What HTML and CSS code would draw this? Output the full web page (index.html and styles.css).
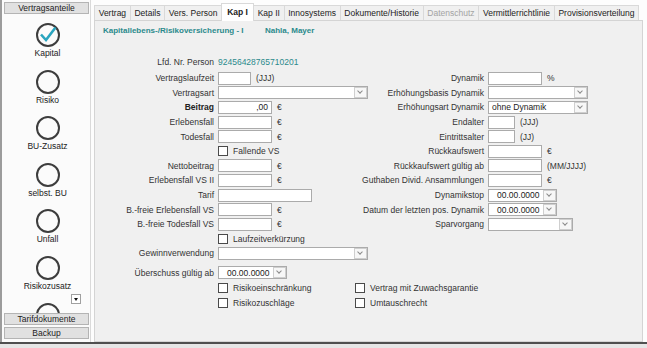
FILE: index.html
```html
<!DOCTYPE html>
<html lang="de">
<head>
  <meta charset="UTF-8">
  <title>Vertrag - Kap I</title>
  <link rel="stylesheet" href="styles.css">
</head>
<body>
  <div class="app">
    <!-- Vertragsanteile -->
    <aside class="sidebar">
      <button class="side-btn first">Vertragsanteile</button>
      <div class="parts">
        <div class="part">
          <span class="ring">
            <svg width="24" height="24" viewBox="0 0 24 24"><polyline points="5,11.5 10,17 19.5,4.5" fill="none" stroke="#2aa5bf" stroke-width="2.6"/></svg>
          </span>
          <span class="part-name">Kapital</span>
        </div>
        <div class="part"><span class="ring"></span><span class="part-name">Risiko</span></div>
        <div class="part"><span class="ring"></span><span class="part-name">BU-Zusatz</span></div>
        <div class="part"><span class="ring"></span><span class="part-name">selbst. BU</span></div>
        <div class="part"><span class="ring"></span><span class="part-name">Unfall</span></div>
        <div class="part"><span class="ring"></span><span class="part-name">Risikozusatz</span></div>
        <div class="part"><span class="ring"></span></div>
      </div>
      <span class="more"></span>
      <button class="side-btn">Tarifdokumente</button>
      <button class="side-btn gap">Backup</button>
    </aside>

    <main class="main">
      <!-- Reiter -->
      <nav class="tabs">
        <span class="tab">Vertrag</span>
        <span class="tab">Details</span>
        <span class="tab">Vers. Person</span>
        <span class="tab active">Kap I</span>
        <span class="tab">Kap II</span>
        <span class="tab">Innosystems</span>
        <span class="tab">Dokumente/Historie</span>
        <span class="tab off">Datenschutz</span>
        <span class="tab">Vermittlerrichtlinie</span>
        <span class="tab">Provisionsverteilung</span>
      </nav>

      <section class="panel">
        <div class="panel-head">
          <span class="head-title">Kapitallebens-/Risikoversicherung - I</span>
          <span>Nahla, Mayer</span>
        </div>

        <div class="form">
          <span class="l1">Lfd. Nr. Person</span>
          <span class="f1 num">92456428765710201</span>

          <span class="l1">Vertragslaufzeit</span>
          <span class="f1"><span class="box w33"></span><span class="unit">(JJJ)</span></span>
          <span class="l2">Dynamik</span>
          <span class="f2"><span class="box w54"></span><span class="unit">%</span></span>

          <span class="l1">Vertragsart</span>
          <span class="f1"><span class="box sel w150"><span></span><span class="drop"></span></span></span>
          <span class="l2">Erhöhungsbasis Dynamik</span>
          <span class="f2"><span class="box sel w100"><span></span><span class="drop"></span></span></span>

          <span class="l1 bold">Beitrag</span>
          <span class="f1"><span class="box w54 right">,00</span><span class="unit">€</span></span>
          <span class="l2">Erhöhungsart Dynamik</span>
          <span class="f2"><span class="box sel w100"><span>ohne Dynamik</span><span class="drop"></span></span></span>

          <span class="l1">Erlebensfall</span>
          <span class="f1"><span class="box w54"></span><span class="unit">€</span></span>
          <span class="l2">Endalter</span>
          <span class="f2"><span class="box w27"></span><span class="unit">(JJJ)</span></span>

          <span class="l1">Todesfall</span>
          <span class="f1"><span class="box w54"></span><span class="unit">€</span></span>
          <span class="l2">Eintrittsalter</span>
          <span class="f2"><span class="box w27"></span><span class="unit">(JJ)</span></span>

          <span class="f1"><span class="check"><span class="cb"></span>Fallende VS</span></span>
          <span class="l2">Rückkaufswert</span>
          <span class="f2"><span class="box w54"></span><span class="unit">€</span></span>

          <span class="l1">Nettobeitrag</span>
          <span class="f1"><span class="box w54"></span><span class="unit">€</span></span>
          <span class="l2">Rückkaufswert gültig ab</span>
          <span class="f2"><span class="box w54"></span><span class="unit">(MM/JJJJ)</span></span>

          <span class="l1">Erlebensfall VS II</span>
          <span class="f1"><span class="box w54"></span><span class="unit">€</span></span>
          <span class="l2">Guthaben Divid. Ansammlungen</span>
          <span class="f2"><span class="box w54"></span><span class="unit">€</span></span>

          <span class="l1">Tarif</span>
          <span class="f1"><span class="box w94"></span></span>
          <span class="l2">Dynamikstop</span>
          <span class="f2"><span class="box date"><span>00.00.0000</span><span class="drop"></span></span></span>

          <span class="l1">B.-freie Erlebensfall VS</span>
          <span class="f1"><span class="box w54"></span><span class="unit">€</span></span>
          <span class="l2">Datum der letzten pos. Dynamik</span>
          <span class="f2"><span class="box date"><span>00.00.0000</span><span class="drop"></span></span></span>

          <span class="l1">B.-freie Todesfall VS</span>
          <span class="f1"><span class="box w54"></span><span class="unit">€</span></span>
          <span class="l2">Sparvorgang</span>
          <span class="f2"><span class="box sel w85"><span></span><span class="drop"></span></span></span>

          <span class="f1"><span class="check"><span class="cb"></span>Laufzeitverkürzung</span></span>

          <span class="l1">Gewinnverwendung</span>
          <span class="f1"><span class="box sel w150"><span></span><span class="drop"></span></span></span>

          <span class="l1 late">Überschuss gültig ab</span>
          <span class="f1 late"><span class="box date"><span>00.00.0000</span><span class="drop"></span></span></span>

          <span class="f1 wide">
            <span class="check pair"><span class="cb"></span>Risikoeinschränkung</span>
            <span class="check"><span class="cb"></span>Vertrag mit Zuwachsgarantie</span>
          </span>

          <span class="f1 wide">
            <span class="check pair"><span class="cb"></span>Risikozuschläge</span>
            <span class="check"><span class="cb"></span>Umtauschrecht</span>
          </span>
        </div>
      </section>
    </main>
  </div>
</body>
</html>
```

FILE: styles.css
```css
/* Basis */
* {
  margin: 0;
  padding: 0;
  box-sizing: border-box;
}

body {
  width: 647px;
  height: 348px;
  overflow: hidden;
  background: #e6e6e6;
  font-family: "Liberation Sans", Arial, sans-serif;
  font-size: 8.5px;
  color: #333;
}

.app {
  display: flex;
  height: 344px;
  background: #fafafa;
  border-bottom: 2px solid #4f4f4f;
}

/* Seitenleiste */
.sidebar {
  position: relative;
  display: flex;
  flex-direction: column;
  width: 91px;
  background: #fbfbfb;
  border-left: 2px solid #9c9c9c;
  border-right: 1px solid #dadada;
}

.side-btn {
  width: 85px;
  height: 12px;
  margin-left: 2px;
  background: #e1e1e1;
  border: 1px solid #b4b4b4;
  font: inherit;
  font-size: 8.5px;
  line-height: 10px;
  color: #222;
}

.side-btn.first {
  margin-top: 2px;
}

.side-btn.gap {
  margin-top: 2px;
}

.parts {
  height: 299px;
  overflow: hidden;
  padding: 9px 0 0 3px;
}

.part {
  display: flex;
  flex-direction: column;
  align-items: center;
  height: 46.6px;
}

.ring {
  position: relative;
  width: 24px;
  height: 24px;
  border: 2px solid #3d3d3d;
  border-radius: 50%;
}

.ring svg {
  position: absolute;
  left: -2px;
  top: -2px;
}

.part-name {
  margin-top: 1px;
  line-height: 10px;
  color: #222;
}

.more {
  position: absolute;
  left: 69px;
  top: 294px;
  width: 10px;
  height: 10px;
  background: #fff;
  border: 1px solid #a0a0a0;
}

.more::after {
  content: "";
  position: absolute;
  left: 2px;
  top: 3px;
  border-left: 2px solid transparent;
  border-right: 2px solid transparent;
  border-top: 3px solid #111;
}

/* Hauptbereich */
.main {
  flex: 1;
  display: flex;
  flex-direction: column;
  padding: 3px 4px 0 3px;
  background: #fdfdfd;
}

.tabs {
  display: flex;
  align-items: flex-end;
  height: 17px;
}

.tab {
  height: 15px;
  padding: 0 3.7px;
  margin-right: -1px;
  background: #f0f0f0;
  border: 1px solid #d9d9d9;
  border-bottom: none;
  font-size: 8.5px;
  line-height: 14px;
  color: #222;
  white-space: nowrap;
}

.tab.active {
  position: relative;
  z-index: 1;
  height: 18px;
  margin-bottom: -1px;
  padding: 0 5px;
  background: #fff;
  font-weight: bold;
  line-height: 16px;
}

.tab.off {
  color: #a3a3a3;
}

.panel {
  flex: 1;
  background: #f0f0f0;
  border: 1px solid #d4d4d4;
}

.panel-head {
  display: flex;
  height: 18px;
  padding: 5px 0 0 8px;
  font-size: 8px;
  font-weight: bold;
  color: #2b8a8c;
}

.head-title {
  width: 162px;
}

/* Formular */
.form {
  display: grid;
  grid-template-columns: 118px 150px 112px 1fr;
  grid-template-rows: 18px repeat(13, 14.6px) 20px 15px 15px;
  column-gap: 4px;
  align-items: center;
  margin: 14px 0 0 1px;
}

.l1,
.l2 {
  justify-self: end;
  white-space: nowrap;
}

.l1 { grid-column: 1; }
.l2 { grid-column: 3; }
.f2 { grid-column: 4; }

.f1 {
  grid-column: 2;
}

.f1,
.f2 {
  display: flex;
  align-items: center;
  gap: 5px;
  white-space: nowrap;
}

.f1.wide {
  grid-column: 2 / 5;
  gap: 0;
}

.late {
  margin-top: 4px;
}

.bold {
  font-weight: bold;
  color: #222;
}

.num {
  color: #2b8a8c;
}

.box {
  display: flex;
  align-items: center;
  height: 13px;
  background: #fff;
  border: 1px solid #ababab;
  color: #222;
}

.w27 { width: 27px; }
.w33 { width: 33px; }
.w54 { width: 54px; }
.w85 { width: 85px; }
.w94 { width: 94px; }
.w100 { width: 100px; }
.w150 { width: 150px; }

.box.right {
  justify-content: flex-end;
  padding-right: 3px;
}

.box.sel {
  justify-content: space-between;
  padding-left: 3px;
}

.box.date {
  width: 69px;
  justify-content: space-between;
  padding-left: 8px;
}

.drop {
  position: relative;
  width: 13px;
  height: 11px;
  background: #f7f7f7;
  border: 1px solid #cfcfcf;
}

.drop::after {
  content: "";
  position: absolute;
  left: 3px;
  top: 1px;
  width: 3px;
  height: 3px;
  border-right: 1px solid #8a8a8a;
  border-bottom: 1px solid #8a8a8a;
  transform: rotate(45deg);
}

.unit {
  color: #333;
}

.check {
  display: flex;
  align-items: center;
  gap: 5px;
}

.check.pair {
  width: 137px;
}

.cb {
  width: 10px;
  height: 10px;
  background: #fff;
  border: 1px solid #4a4a4a;
}
```
